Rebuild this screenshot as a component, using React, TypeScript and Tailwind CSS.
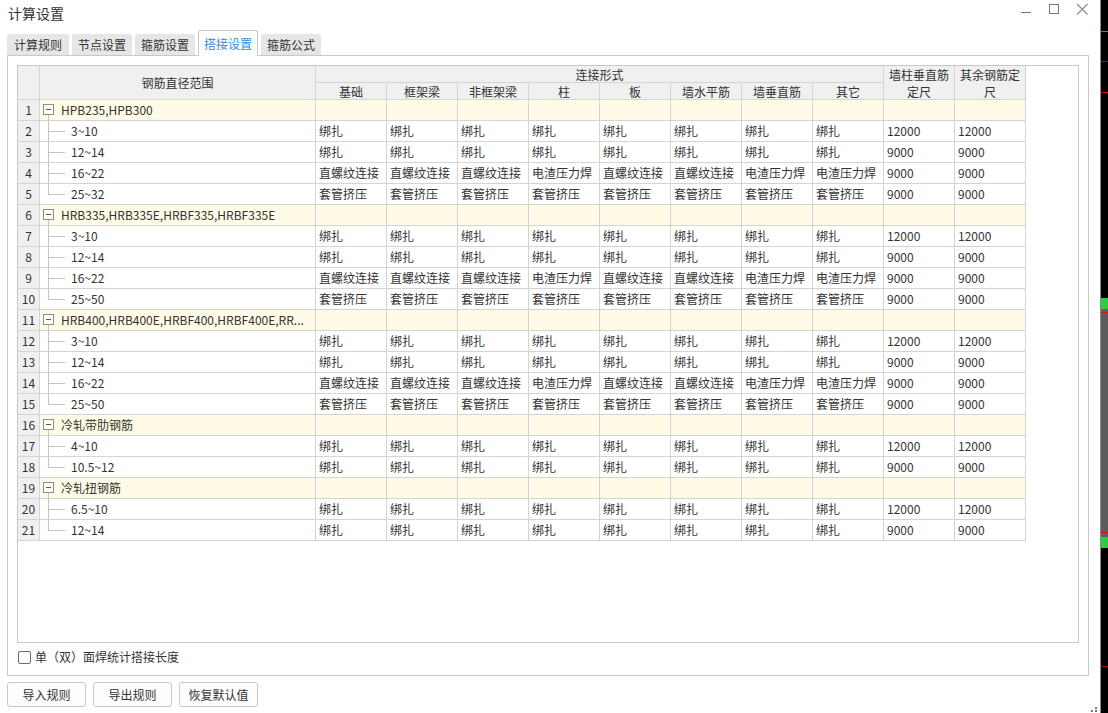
import React from "react";

type Group = { name: string; rows: { range: string; cells: string[] }[] };

const bind = (a: string, b: string) => [...Array(8).fill("绑扎"), a, b];
const screw = [
  "直螺纹连接",
  "直螺纹连接",
  "直螺纹连接",
  "电渣压力焊",
  "直螺纹连接",
  "直螺纹连接",
  "电渣压力焊",
  "电渣压力焊",
  "9000",
  "9000",
];
const sleeve = [...Array(8).fill("套管挤压"), "9000", "9000"];

const GROUPS: Group[] = [
  {
    name: "HPB235,HPB300",
    rows: [
      { range: "3~10", cells: bind("12000", "12000") },
      { range: "12~14", cells: bind("9000", "9000") },
      { range: "16~22", cells: screw },
      { range: "25~32", cells: sleeve },
    ],
  },
  {
    name: "HRB335,HRB335E,HRBF335,HRBF335E",
    rows: [
      { range: "3~10", cells: bind("12000", "12000") },
      { range: "12~14", cells: bind("9000", "9000") },
      { range: "16~22", cells: screw },
      { range: "25~50", cells: sleeve },
    ],
  },
  {
    name: "HRB400,HRB400E,HRBF400,HRBF400E,RR...",
    rows: [
      { range: "3~10", cells: bind("12000", "12000") },
      { range: "12~14", cells: bind("9000", "9000") },
      { range: "16~22", cells: screw },
      { range: "25~50", cells: sleeve },
    ],
  },
  {
    name: "冷轧带肋钢筋",
    rows: [
      { range: "4~10", cells: bind("12000", "12000") },
      { range: "10.5~12", cells: bind("9000", "9000") },
    ],
  },
  {
    name: "冷轧扭钢筋",
    rows: [
      { range: "6.5~10", cells: bind("12000", "12000") },
      { range: "12~14", cells: bind("9000", "9000") },
    ],
  },
];

const SUB_HEADERS = ["基础", "框架梁", "非框架梁", "柱", "板", "墙水平筋", "墙垂直筋", "其它"];
const TABS = ["计算规则", "节点设置", "箍筋设置", "搭接设置", "箍筋公式"];

const cell = "border-r border-b border-[#d4d4d4]";
const head = `${cell} bg-[#f0f0f0] flex items-center justify-center text-center leading-[17px]`;
const numCell = `${cell} bg-[#f0f0f0] flex items-center justify-center`;

const GroupRow = ({ no, name }: { no: number; name: string }) => (
  <>
    <div className={numCell}>{no}</div>
    <div className={`${cell} bg-[#fffbe6] flex pl-[3px] overflow-hidden whitespace-nowrap`}>
      <div className="flex w-[11px] shrink-0 flex-col">
        <div className="h-[4px]" />
        <div className="flex h-[11px] w-[11px] items-center justify-center border border-[#8c8c8c] bg-[#fffef6]">
          <div className="h-px w-[5px] bg-[#555]" />
        </div>
        <div className="ml-[5px] flex-1 border-l border-[#c4c4c4]" />
      </div>
      <div className="ml-[7px] flex items-center">{name}</div>
    </div>
    {Array.from({ length: 10 }).map((_, i) => (
      <div key={i} className={`${cell} bg-[#fffbe6]`} />
    ))}
  </>
);

const ChildRow = ({
  no,
  range,
  cells,
  last,
}: {
  no: number;
  range: string;
  cells: string[];
  last: boolean;
}) => (
  <>
    <div className={numCell}>{no}</div>
    <div className={`${cell} flex pl-[8px]`}>
      <div className="flex w-[17px] shrink-0 flex-col">
        <div className="h-[11px] border-b border-l border-[#c4c4c4]" />
        <div className={last ? "flex-1" : "flex-1 border-l border-[#c4c4c4]"} />
      </div>
      <div className="ml-[6px] flex items-center">{range}</div>
    </div>
    {cells.map((c, i) => (
      <div
        key={i}
        className={`${cell} flex items-center overflow-hidden whitespace-nowrap pl-[3px]`}
      >
        {c}
      </div>
    ))}
  </>
);

const RebarTable = () => {
  let no = 0;
  return (
    <div className="grid grid-cols-[22px_276px_repeat(10,71px)] grid-rows-[17px_17px_repeat(21,21px)] text-[12px] text-[#333]">
      <div className={`${head} row-span-2`} />
      <div className={`${head} row-span-2`}>钢筋直径范围</div>
      <div className={`${head} col-span-8`}>连接形式</div>
      <div className={`${head} row-span-2 px-[3px]`}>墙柱垂直筋定尺</div>
      <div className={`${head} row-span-2 px-[3px]`}>其余钢筋定尺</div>
      {SUB_HEADERS.map((h) => (
        <div key={h} className={head}>
          {h}
        </div>
      ))}
      {GROUPS.map((g) => {
        no += 1;
        const gNo = no;
        return (
          <React.Fragment key={g.name}>
            <GroupRow no={gNo} name={g.name} />
            {g.rows.map((r, i) => {
              no += 1;
              return (
                <ChildRow
                  key={i}
                  no={no}
                  range={r.range}
                  cells={r.cells}
                  last={i === g.rows.length - 1}
                />
              );
            })}
          </React.Fragment>
        );
      })}
    </div>
  );
};

const WindowControls = () => (
  <svg width="72" height="16" viewBox="0 0 72 16" className="mr-[10px] mt-[1px]">
    <line x1="3" y1="11.5" x2="13" y2="11.5" stroke="#777" strokeWidth="1" />
    <rect x="31.5" y="3.5" width="9" height="9" fill="none" stroke="#777" strokeWidth="1" />
    <line x1="59" y1="3" x2="69.5" y2="13.5" stroke="#888" strokeWidth="1.1" />
    <line x1="69.5" y1="3" x2="59" y2="13.5" stroke="#888" strokeWidth="1.1" />
  </svg>
);

const SideStrip = () => (
  <div className="flex h-full w-[8px] flex-col border-l border-[#8a8a8a] bg-black">
    <div className="h-[31px]" />
    <div className="h-px bg-[#2fa82f]" />
    <div className="h-[29px]" />
    <div className="h-px bg-[#0c4a0c]" />
    <div className="h-[30px]" />
    <div className="h-px bg-[#e01010]" />
    <div className="h-[205px]" />
    <div className="h-[11px] bg-[#2ecc40]" />
    <div className="h-[3px] bg-[#5c5c5c]" />
    <div className="h-px bg-[#e01010]" />
    <div className="h-[219px] bg-[#5c5c5c]" />
    <div className="h-px bg-[#e01010]" />
    <div className="h-[4px] bg-[#5c5c5c]" />
    <div className="h-[11px] bg-[#2ecc40]" />
    <div className="h-[118px]" />
    <div className="h-px bg-[#a00000]" />
    <div className="flex-1" />
  </div>
);

export default function App() {
  return (
    <div className="flex h-[713px] w-[1108px] overflow-hidden bg-white font-['Noto_Sans_CJK_SC','Microsoft_YaHei',sans-serif] text-[#333]">
      <div className="relative flex w-[1100px] flex-col">
        <div className="flex h-[30px] items-start justify-between">
          <div className="pl-[8px] pt-[3px] text-[14px] leading-[20px] text-[#333]">计算设置</div>
          <WindowControls />
        </div>

        <div className="flex h-[25px] items-end gap-[3px] pl-[7px]">
          {TABS.map((t, i) =>
            i === 3 ? (
              <div
                key={t}
                className="relative z-10 -mb-px flex h-[26px] w-[60px] items-center justify-center rounded-t-[3px] border-x border-t border-[#c8c8c8] bg-white text-[12px] text-[#2d8cf0]"
              >
                {t}
              </div>
            ) : (
              <div
                key={t}
                className={`flex h-[21px] items-center justify-center rounded-t-[3px] bg-[#e6e6e6] text-[12px] text-[#333] ${
                  i === 0 ? "w-[62px]" : "w-[60px]"
                }`}
              >
                {t}
              </div>
            )
          )}
        </div>

        <div className="ml-[7px] box-border h-[621px] w-[1082px] border border-[#c8c8c8] px-[9px] pt-[9px]">
          <div className="box-border h-[578px] w-[1062px] overflow-hidden border border-[#c8c8c8] bg-white">
            <RebarTable />
          </div>
          <div className="mt-[7px] flex items-center gap-[4px] pl-[1px]">
            <div className="box-border h-[13px] w-[13px] rounded-[2px] border border-[#6b6b6b] bg-white" />
            <span className="text-[12px] leading-[14px]">单（双）面焊统计搭接长度</span>
          </div>
        </div>

        <div className="mt-[6px] flex gap-[7px] pl-[7px]">
          {["导入规则", "导出规则", "恢复默认值"].map((b) => (
            <button
              key={b}
              className="box-border flex h-[25px] w-[79px] items-center justify-center rounded-[3px] border border-[#c8c8c8] bg-[#fdfdfd] text-[12px] text-[#333]"
            >
              {b}
            </button>
          ))}
        </div>

        <svg width="6" height="5" viewBox="0 0 6 5" className="absolute bottom-[1px] right-[3px]">
          <rect x="4" y="0" width="2" height="2" fill="#777" />
          <rect x="0" y="3" width="2" height="2" fill="#777" />
          <rect x="4" y="3" width="2" height="2" fill="#777" />
        </svg>
      </div>
      <SideStrip />
    </div>
  );
}
